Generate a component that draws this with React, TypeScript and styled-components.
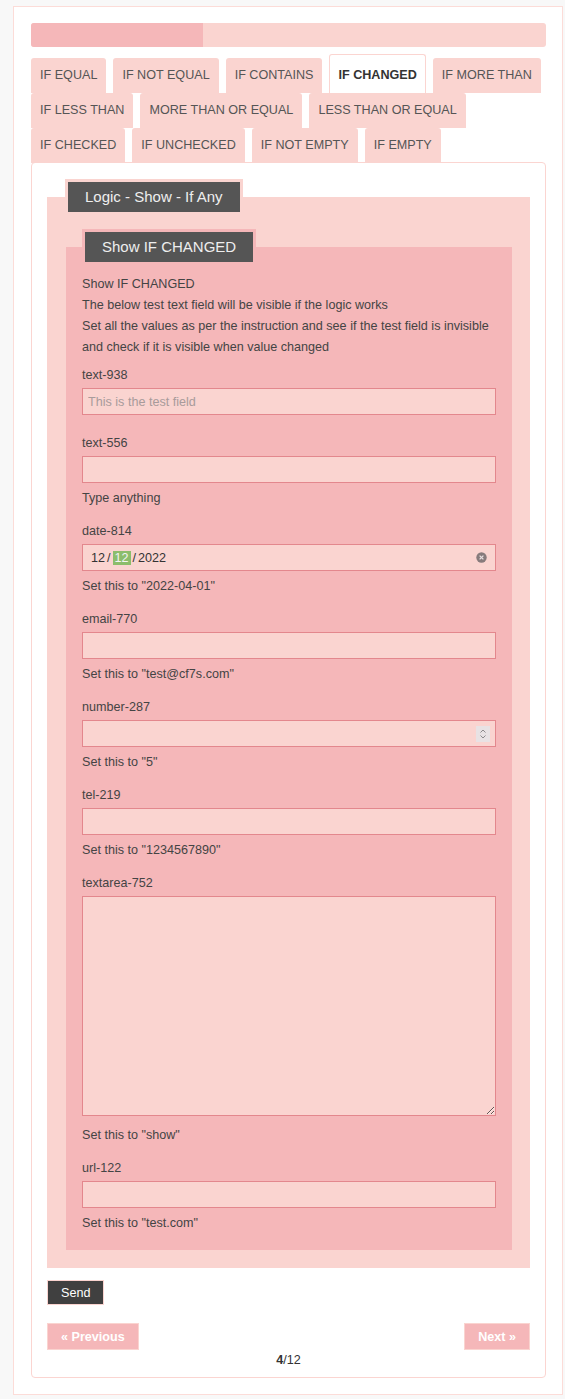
import styled, { createGlobalStyle } from "styled-components";

const GlobalStyle = createGlobalStyle`
  html, body {
    margin: 0;
    padding: 0;
    background: #f8f8f8;
  }
  body {
    font-family: "Liberation Sans", Arial, sans-serif;
    font-size: 12.6px;
    color: #444;
  }
  * {
    box-sizing: border-box;
  }
`;

const Page = styled.div`
  width: 550px;
  margin: 6px 0 4px 13px;
  padding: 16px 16px 16px 17px;
  background: #fff;
  border: 1px solid #fcdcd8;
`;

const Progress = styled.div`
  height: 24px;
  background: #fad4d0;
  border-radius: 3px;
  overflow: hidden;
`;

const ProgressFill = styled.div`
  height: 100%;
  background: #f5b7b9;
`;

const TabList = styled.div`
  margin-top: 7px;
  display: flex;
  flex-direction: column;
`;

const TabRow = styled.div`
  display: flex;
  align-items: flex-end;
  gap: 7px;
`;

const Tab = styled.div<{ $active?: boolean }>`
  height: ${(p) => (p.$active ? 39 : 35)}px;
  padding: ${(p) => (p.$active ? "3px 8px 0" : "0 9px")};
  line-height: 35px;
  white-space: nowrap;
  background: ${(p) => (p.$active ? "#fff" : "#fad4d0")};
  border: ${(p) => (p.$active ? "1px solid #fbd5d1" : "none")};
  border-bottom: none;
  border-radius: 3px 3px 0 0;
  font-weight: ${(p) => (p.$active ? 700 : 400)};
  color: ${(p) => (p.$active ? "#333" : "#555")};
`;

const Panel = styled.div`
  margin-top: -1px;
  background: #fff;
  border: 1px solid #fbd5d1;
  border-radius: 4px;
  padding: 16px 15px 7px;
`;

const FieldSet = styled.fieldset<{ $bg: string; $pad: string }>`
  margin: 0;
  min-width: 0;
  border: none;
  background: ${(p) => p.$bg};
  padding: ${(p) => p.$pad};
`;

const Legend = styled.legend<{ $bg: string; $shift: number }>`
  padding: 3px;
  margin-left: ${(p) => p.$shift}px;
  background: ${(p) => p.$bg};
`;

const LegendText = styled.span`
  display: block;
  background: #555;
  color: #eee;
  font-size: 15px;
  line-height: 30px;
  padding: 0 17px;
  white-space: nowrap;
`;

const Intro = styled.p`
  margin: 0 0 7px;
  line-height: 21px;
  white-space: nowrap;
`;

const Field = styled.div<{ $gap: number }>`
  margin-bottom: ${(p) => p.$gap}px;

  &:last-child {
    margin-bottom: 0;
  }
`;

const Label = styled.label`
  display: block;
  line-height: 21px;
`;

const boxLook = `
  display: block;
  width: 100%;
  margin-top: 2px;
  background: #fad4d0;
  border: 1px solid #e3878d;
  font: inherit;
  color: #333;
  outline: none;
`;

const TextInput = styled.input`
  ${boxLook}
  height: 27px;
  padding: 0 5px;

  &::placeholder {
    color: #a89b9b;
  }
`;

const FakeInput = styled.div`
  ${boxLook}
  height: 27px;
  display: flex;
  align-items: center;
  padding: 0 8px;
`;

const DatePart = styled.span<{ $selected?: boolean }>`
  padding: ${(p) => (p.$selected ? "0 2px" : "0")};
  line-height: 14px;
  background: ${(p) => (p.$selected ? "#8cbd6c" : "transparent")};
  color: ${(p) => (p.$selected ? "#f4f4f4" : "#333")};
`;

const DateSep = styled.span`
  margin: 0 2px;
  color: #333;
`;

const EndIcon = styled.span`
  margin-left: auto;
  display: flex;
`;

const Spinner = styled.span`
  margin-left: auto;
  margin-right: -3px;
  width: 14px;
  height: 16px;
  background: #e8e2e4;
  display: flex;
`;

const TextArea = styled.textarea`
  ${boxLook}
  height: 220px;
  padding: 4px 5px;
  resize: both;
`;

const Help = styled.div<{ $top?: number }>`
  margin-top: ${(p) => p.$top ?? 5}px;
  line-height: 21px;
`;

const SendButton = styled.button`
  display: block;
  margin-top: 12px;
  height: 25px;
  padding: 0 13px;
  background: #404040;
  color: #fff;
  border: 1px solid #fad4d0;
  font: inherit;
`;

const Pager = styled.div`
  margin-top: 18px;
  display: flex;
  justify-content: space-between;
`;

const PageButton = styled.button`
  height: 27px;
  padding: 0 13px;
  background: #f5b7b9;
  color: #fff;
  border: 1px solid #fad4d0;
  font: inherit;
  font-weight: 700;
`;

const PageCount = styled.div`
  text-align: center;
  line-height: 20px;
  color: #333;

  b {
    font-weight: 700;
  }
`;

const tabRows = [
  ["IF EQUAL", "IF NOT EQUAL", "IF CONTAINS", "IF CHANGED", "IF MORE THAN"],
  ["IF LESS THAN", "MORE THAN OR EQUAL", "LESS THAN OR EQUAL"],
  ["IF CHECKED", "IF UNCHECKED", "IF NOT EMPTY", "IF EMPTY"],
];

const ClearIcon = () => (
  <svg width="11" height="11" viewBox="0 0 11 11">
    <circle cx="5.5" cy="5.5" r="5.2" fill="#877b7c" />
    <path d="M3.6 3.6 L7.4 7.4 M7.4 3.6 L3.6 7.4" stroke="#e9dfe0" strokeWidth="1.3" />
  </svg>
);

const SpinIcon = () => (
  <svg width="14" height="16" viewBox="0 0 14 16">
    <path d="M4.5 6.5 L7 4 L9.5 6.5" fill="none" stroke="#8d8a8c" strokeWidth="1" />
    <path d="M4.5 9.5 L7 12 L9.5 9.5" fill="none" stroke="#8d8a8c" strokeWidth="1" />
  </svg>
);

const App = () => {
  const page = 4;
  const total = 12;

  return (
    <>
      <GlobalStyle />
      <Page>
        <Progress>
          <ProgressFill style={{ width: `${(page / total) * 100}%` }} />
        </Progress>

        <TabList>
          {tabRows.map((row, i) => (
            <TabRow key={i}>
              {row.map((name) => (
                <Tab key={name} $active={name === "IF CHANGED"}>
                  {name}
                </Tab>
              ))}
            </TabRow>
          ))}
        </TabList>

        <Panel>
          <FieldSet $bg="#fad4d0" $pad="14px 18px 18px 19px">
            <Legend $bg="#fad4d0" $shift={-1}>
              <LegendText>Logic - Show - If Any</LegendText>
            </Legend>

            <FieldSet $bg="#f5b7b9" $pad="9px 16px 16px">
              <Legend $bg="#f5b7b9" $shift={0}>
                <LegendText>Show IF CHANGED</LegendText>
              </Legend>

              <Intro>
                Show IF CHANGED
                <br />
                The below test text field will be visible if the logic works
                <br />
                Set all the values as per the instruction and see if the test field is invisible
                <br />
                and check if it is visible when value changed
              </Intro>

              <Field $gap={18}>
                <Label>text-938</Label>
                <TextInput placeholder="This is the test field" />
              </Field>

              <Field $gap={12}>
                <Label>text-556</Label>
                <TextInput />
                <Help>Type anything</Help>
              </Field>

              <Field $gap={12}>
                <Label>date-814</Label>
                <FakeInput>
                  <DatePart>12</DatePart>
                  <DateSep>/</DateSep>
                  <DatePart $selected>12</DatePart>
                  <DateSep>/</DateSep>
                  <DatePart>2022</DatePart>
                  <EndIcon>
                    <ClearIcon />
                  </EndIcon>
                </FakeInput>
                <Help>Set this to "2022-04-01"</Help>
              </Field>

              <Field $gap={12}>
                <Label>email-770</Label>
                <TextInput />
                <Help>Set this to "test@cf7s.com"</Help>
              </Field>

              <Field $gap={12}>
                <Label>number-287</Label>
                <FakeInput>
                  <Spinner>
                    <SpinIcon />
                  </Spinner>
                </FakeInput>
                <Help>Set this to "5"</Help>
              </Field>

              <Field $gap={12}>
                <Label>tel-219</Label>
                <TextInput />
                <Help>Set this to "1234567890"</Help>
              </Field>

              <Field $gap={12}>
                <Label>textarea-752</Label>
                <TextArea />
                <Help $top={9}>Set this to "show"</Help>
              </Field>

              <Field $gap={12}>
                <Label>url-122</Label>
                <TextInput />
                <Help>Set this to "test.com"</Help>
              </Field>
            </FieldSet>
          </FieldSet>

          <SendButton>Send</SendButton>

          <Pager>
            <PageButton>« Previous</PageButton>
            <PageButton>Next »</PageButton>
          </Pager>

          <PageCount>
            <b>{page}</b>/{total}
          </PageCount>
        </Panel>
      </Page>
    </>
  );
};

export default App;
